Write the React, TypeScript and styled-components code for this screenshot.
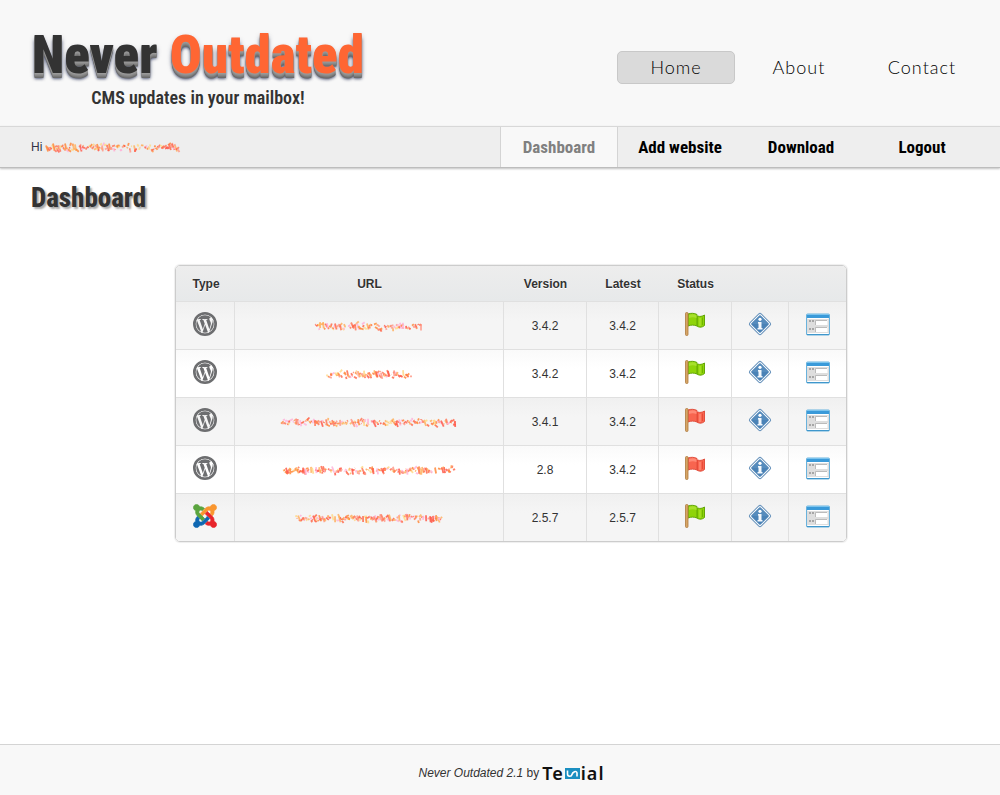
import React from "react";
import styled, { createGlobalStyle } from "styled-components";
import { FaWordpress } from "react-icons/fa";

const display = `"Roboto Condensed", "Open Sans Condensed", sans-serif`;
const body = `"Liberation Sans", Arial, sans-serif`;

const GlobalStyle = createGlobalStyle`
  * { box-sizing: border-box; }
  body { margin: 0; background: #fff; color: #333; font: 12px/16px ${body}; }
  a { color: inherit; text-decoration: none; }
`;

const Page = styled.div`
  display: flex;
  flex-direction: column;
  min-height: 100vh;
`;

const Header = styled.header`
  display: flex;
  justify-content: space-between;
  align-items: flex-start;
  min-height: 126px;
  padding: 24px 19px 0 32px;
  background: #f8f8f8;
`;

const Brand = styled.a`
  display: flex;
  flex-direction: column;
  align-items: center;
  font-family: ${display};
`;

const BrandName = styled.span`
  font-size: 53px;
  line-height: 62px;
  font-weight: 900;
  color: #333;
  text-shadow: 0 1px 0 #999, 0 2px 0 #909090, 0 3px 0 #858585, 0 4px 0 #777,
    0 5px 0 #6a6a6a, 0 6px 3px rgba(30, 40, 80, 0.7), 0 3px 5px rgba(30, 40, 80, 0.35);
`;

const BrandAccent = styled.span`
  color: #ff6633;
`;

const Tagline = styled.span`
  font-size: 18px;
  line-height: 24px;
  font-weight: 600;
`;

const MainNav = styled.nav`
  display: flex;
  gap: 5px;
  padding-top: 27px;
`;

const MainLink = styled.a<{ $active?: boolean }>`
  width: 118px;
  padding: 3px 0 4px;
  border: 1px solid ${(p) => (p.$active ? "#c8c8c8" : "transparent")};
  border-radius: 5px;
  background: ${(p) => (p.$active ? "#dadada" : "transparent")};
  color: #000;
  font: 300 18px/24px Lato, sans-serif;
  letter-spacing: 1px;
  text-align: center;
`;

const UserBar = styled.div`
  display: flex;
  justify-content: space-between;
  align-items: stretch;
  height: 42px;
  padding: 0 19px 0 31px;
  border-top: 1px solid #d8d8d8;
  border-bottom: 1px solid #bdbdbd;
  background: #eee;
  box-shadow: 0 1px 2px rgba(0, 0, 0, 0.25);
`;

const Greeting = styled.div`
  display: flex;
  align-items: center;
  gap: 3px;
  color: #333344;
`;

const Tabs = styled.nav`
  display: flex;
  gap: 3px;
`;

const Tab = styled.a<{ $active?: boolean }>`
  width: 118px;
  border: solid ${(p) => (p.$active ? "#d4d4d4" : "transparent")};
  border-width: 0 1px;
  background: ${(p) => (p.$active ? "#f8f8f8" : "transparent")};
  color: ${(p) => (p.$active ? "#808080" : "#000")};
  font: 700 17px/41px ${display};
  text-align: center;
`;

const Main = styled.main`
  flex: 1;
  padding: 12px 0 40px 22px;
`;

const Title = styled.h1`
  margin: 0 0 49px 9px;
  font: 800 27px/36px ${display};
  color: #333;
  text-shadow: 2px 2px 2px rgba(0, 0, 0, 0.35);
`;

const SiteTable = styled.table`
  width: 672px;
  max-width: 100%;
  margin: 0 auto;
  table-layout: fixed;
  border: 1px solid #ccc;
  border-radius: 5px;
  border-spacing: 0;
  overflow: hidden;
  box-shadow: 0 0 1px 1px #eee;
`;

const Col = styled.col<{ $w: number }>`
  width: ${(p) => p.$w}px;
`;

const HeadCell = styled.th`
  height: 35px;
  padding: 0 0 0 2px;
  font-weight: bold;
  text-shadow: 0 1px 0 #fff;
`;

const HeadRow = styled.tr`
  background: linear-gradient(#ededed, #e7e9ea);
`;

const Cell = styled.td`
  height: 48px;
  padding: 0;
  border-top: 1px solid #e0e0e0;
  border-left: 1px solid #e0e0e0;
  text-align: center;
  &:first-child { border-left: 0; }
`;

const SiteRow = styled.tr`
  ${Cell} { background: linear-gradient(#f0f0f0, #f5f5f5 40%); }
  &:nth-child(even) ${Cell} { background: linear-gradient(#fafafa, #fff 40%); }
`;

const IconBox = styled.span`
  display: flex;
  justify-content: center;
  padding-bottom: 3px;
`;

const IconButton = styled.button`
  display: block;
  margin: 0 auto;
  padding: 0 0 3px;
  border: 0;
  background: none;
  cursor: pointer;
  svg { display: block; }
`;

const Footer = styled.footer`
  display: flex;
  justify-content: center;
  align-items: center;
  gap: 3px;
  height: 51px;
  padding: 6px 0 0 23px;
  border-top: 1px solid #d4d4d4;
  background: #f8f8f8;
`;

const Maker = styled.a`
  display: flex;
  align-items: center;
  gap: 1px;
  color: #111;
  font: 600 18px/20px "Noto Sans", sans-serif;
  letter-spacing: 1px;
`;

const SmudgeSvg = styled.svg`
  display: inline-block;
  vertical-align: middle;
`;

const smudgeColors = ["#ff6a4d", "#ff8a3c", "#ff5a4a", "#ffb060", "#ffb3d9", "#ffd98a", "#ff7a5c", "#ff9a8a"];

/* Scribbled-out private text: word-like groups of short, blotchy strokes. */
function Smudge({ width, seed }: { width: number; seed: number }) {
  let s = seed * 7919 + 13;
  const rnd = () => {
    s = (s * 1103515245 + 12345) % 2147483648;
    return s / 2147483648;
  };
  const marks: React.ReactElement[] = [];
  for (let x = 1; x < width - 3; x += 1) {
    if (rnd() < 0.06) x += 2;
    const tall = rnd() < 0.15;
    const y = tall ? 2 + rnd() * 3 : 4 + rnd() * 5;
    const dy = tall ? 6 : rnd() * 6 - 3;
    marks.push(
      <path
        key={x}
        d={`M${x} ${y.toFixed(1)}l${(rnd() * 3).toFixed(1)} ${dy.toFixed(1)}`}
        stroke={smudgeColors[Math.floor(rnd() * smudgeColors.length)]}
        strokeWidth="1.8"
        opacity=".85"
      />
    );
  }
  return (
    <SmudgeSvg width={width} height="13" viewBox={`0 0 ${width} 13`} fill="none" aria-hidden="true">
      {marks}
    </SmudgeSvg>
  );
}

function WordpressIcon() {
  return (
    <svg width="24" height="24" viewBox="0 0 24 24" role="img" aria-label="WordPress" color="#6d6e70">
      <FaWordpress x="1.500" y="1.500" size={21} />
      <circle cx="12" cy="12" r="10.700" fill="none" stroke="#6d6e70" strokeWidth="2.600" />
    </svg>
  );
}

function JoomlaIcon() {
  return (
    <svg width="24" height="24" viewBox="-8 24 464 464" strokeWidth="14" strokeLinejoin="round" role="img" aria-label="Joomla">
      <path fill="#5ba53f" stroke="#5ba53f" d="M.6 92.1C.6 58.8 27.4 32 60.4 32c30 0 54.5 21.9 59.2 50.2 32.6-7.6 67.1.6 96.5 30l-44.3 44.3c-20.5-20.5-42.6-16.3-55.4-3.5-14.3 14.3-14.3 37.9 0 52.2l99.5 99.5-44 44.3c-87.7-87.2-49.7-49.7-99.8-99.7-26.8-26.5-35-64.8-24.8-98.9C20.4 144.6.6 120.7.6 92.1z" />
      <path fill="#f9962f" stroke="#f9962f" d="M130.1 208.5l44.3 44.3c10-10 89.7-89.7 99.7-99.8 14.3-14.3 37.6-14.3 51.9 0 12.8 12.8 17 35-3.5 55.4l44 44.3c31.2-31.2 38.5-67.6 28.9-101.2 29.2-4.1 51.9-29.2 51.9-59.5 0-33.2-26.8-60.1-59.8-60.1-30.3 0-55.4 22.5-59.5 51.6-33.8-9.9-71.7-1.5-98.3 25.1-18.3 19.1-71.1 71.5-99.6 99.9z" />
      <path fill="#e8252b" stroke="#e8252b" d="M396.4 360.7c8.2-32.7-.9-68.5-26.3-93.9-11.8-12.2 5 4.7-99.5-99.7l-44.3 44.3 99.7 99.7c14.3 14.3 14.3 37.6 0 51.9-12.8 12.8-35 17-55.4-3.5l-44 44.3c27.6 30.2 68 38.8 102.7 28 5.5 27.4 29.7 48.1 58.9 48.1 33 0 59.8-26.8 59.8-60.1 0-30.2-22.5-55-51.6-59.1z" />
      <path fill="#0f68b2" stroke="#0f68b2" d="M312.1 307.6l-44-44.3c-87 86.4-50.4 50.4-99.7 99.8-14.3 14.3-37.6 14.3-51.9 0-13.1-13.4-16.9-35.3 3.2-55.4l-44-44.3c-30.2 30.2-38 65.2-29.5 98.3-26.7 6-46.2 29.9-46.2 58.2C0 453.2 26.8 480 59.8 480c28.6 0 52.5-19.8 58.6-46.7 32.7 8.2 68.5-.6 94.2-26 32.1-32 12.2-12.4 99.5-99.7z" />
      <path fill="#5ba53f" d="M116 205l99.500 99.500-44 44.300-92-92z" />
    </svg>
  );
}

function FlagIcon({ ok }: { ok: boolean }) {
  const c = ok
    ? { edge: "#63a608", base: "#8fd40a", light: "#a8e02c", dark: "#6fb400" }
    : { edge: "#e0503f", base: "#f8654f", light: "#ff8a76", dark: "#e84a38" };
  return (
    <svg width="20" height="24" viewBox="0 0 20 24" role="img" aria-label={ok ? "Up to date" : "Outdated"}>
      <path d="M3 2C6 1 9 1 12 2.500v11.500c-3-1.200-6-1.200-9 0z" fill={c.base} stroke={c.edge} />
      <path d="M12.500 4c2.500.800 4.500.500 7-1v10.500c-2.500 2-4.500 2-7 1z" fill={c.base} stroke={c.edge} />
      <path d="M4 3C7 2 9 2 11.500 3.200V6c-3-1-5-.800-7.500 0z" fill={c.light} />
      <path d="M15 6v8" stroke={c.light} strokeWidth="1.500" />
      <path d="M12.500 4v10.500M17.500 5.500V13" stroke={c.dark} />
      <rect x="0.500" y="0.500" width="2.500" height="23" rx="1" fill="#d6a566" stroke="#ad7a3d" strokeWidth=".8" />
    </svg>
  );
}

function InfoIcon() {
  return (
    <svg width="24" height="24" viewBox="0 0 24 24" aria-hidden="true">
      <rect x="4" y="4" width="16" height="16" rx="2" transform="rotate(45 12 12)" fill="#fff" stroke="#6b95bd" />
      <rect x="5.500" y="5.500" width="13" height="13" rx="1" transform="rotate(45 12 12)" fill="#4a82b6" />
      <path d="M12 3.500L20.500 12h-17z" fill="#5f92c2" opacity=".6" />
      <circle cx="12" cy="7.300" r="1.600" fill="#fff" />
      <path d="M10 10h3.500v6h1v1.500h-5V16h1v-4.500H10z" fill="#f4f8fc" />
    </svg>
  );
}

function WindowIcon() {
  return (
    <svg width="24" height="24" viewBox="0 0 24 24" aria-hidden="true">
      <rect x=".5" y="2" width="23" height="21" rx="1" fill="#dedede" stroke="#69b2dc" />
      <rect x="1" y="2" width="22" height="4" fill="#3a9ad9" />
      <path d="M1 2.500h22" stroke="#7cc4ee" />
      <path d="M1 22.500h22" stroke="#3f97cc" />
      <path d="M1.500 6.500h21M1.500 21.500h21" stroke="#fff" />
      <rect x="10" y="8" width="11.500" height="5" fill="#fff" />
      <rect x="10" y="15" width="11.500" height="5" fill="#fff" />
      <path d="M9.500 13V8.500H21M9.500 20v-4.500H21" fill="none" stroke="#bbb" />
      <path d="M3 9h5M3 17h5" stroke="#999" strokeWidth="2" strokeDasharray="2 1" opacity=".8" />
    </svg>
  );
}

function MakerMark() {
  return (
    <svg width="15" height="12" viewBox="0 0 15 12" role="img" aria-label="s">
      <rect y="1" width="15" height="11" fill="#1b8fc1" />
      <path d="M2.500 3.500V7c0 3 4 3 4.500.500S11.500 3 12 6v3.500" fill="none" stroke="#fff" strokeWidth="1.600" />
    </svg>
  );
}

const sites = [
  { cms: "wp", urlWidth: 111, version: "3.4.2", latest: "3.4.2", ok: true },
  { cms: "wp", urlWidth: 86, version: "3.4.2", latest: "3.4.2", ok: true },
  { cms: "wp", urlWidth: 179, version: "3.4.1", latest: "3.4.2", ok: false },
  { cms: "wp", urlWidth: 175, version: "2.8", latest: "3.4.2", ok: false },
  { cms: "joomla", urlWidth: 152, version: "2.5.7", latest: "2.5.7", ok: true },
];

const columnWidths = [58, 269, 83, 72, 73, 57, 58];

export default function App() {
  return (
    <Page>
      <GlobalStyle />
      <Header>
        <Brand href="#">
          <BrandName>
            Never <BrandAccent>Outdated</BrandAccent>
          </BrandName>
          <Tagline>CMS updates in your mailbox!</Tagline>
        </Brand>
        <MainNav>
          <MainLink href="#" $active>Home</MainLink>
          <MainLink href="#about">About</MainLink>
          <MainLink href="#contact">Contact</MainLink>
        </MainNav>
      </Header>
      <UserBar>
        <Greeting>
          Hi <Smudge width={137} seed={3} />
        </Greeting>
        <Tabs>
          <Tab href="#dashboard" $active>Dashboard</Tab>
          <Tab href="#add">Add website</Tab>
          <Tab href="#download">Download</Tab>
          <Tab href="#logout">Logout</Tab>
        </Tabs>
      </UserBar>
      <Main>
        <Title>Dashboard</Title>
        <SiteTable>
          <colgroup>
            {columnWidths.map((w, i) => <Col key={i} $w={w} />)}
          </colgroup>
          <thead>
            <HeadRow>
              <HeadCell>Type</HeadCell>
              <HeadCell>URL</HeadCell>
              <HeadCell>Version</HeadCell>
              <HeadCell>Latest</HeadCell>
              <HeadCell>Status</HeadCell>
              <HeadCell />
              <HeadCell />
            </HeadRow>
          </thead>
          <tbody>
            {sites.map((site, i) => (
              <SiteRow key={i}>
                <Cell>
                  <IconBox>{site.cms === "wp" ? <WordpressIcon /> : <JoomlaIcon />}</IconBox>
                </Cell>
                <Cell><Smudge width={site.urlWidth} seed={i + 11} /></Cell>
                <Cell>{site.version}</Cell>
                <Cell>{site.latest}</Cell>
                <Cell><IconBox><FlagIcon ok={site.ok} /></IconBox></Cell>
                <Cell><IconButton aria-label="Information"><InfoIcon /></IconButton></Cell>
                <Cell><IconButton aria-label="Open site"><WindowIcon /></IconButton></Cell>
              </SiteRow>
            ))}
          </tbody>
        </SiteTable>
      </Main>
      <Footer>
        <span><em>Never Outdated 2.1</em> by</span>
        <Maker href="#maker">Te<MakerMark />ial</Maker>
      </Footer>
    </Page>
  );
}
